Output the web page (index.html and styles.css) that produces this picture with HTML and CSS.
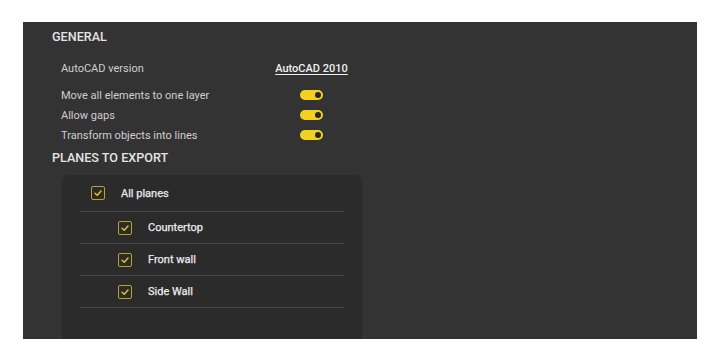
FILE: index.html
```html
<!DOCTYPE html>
<html>
<head>
<meta charset="utf-8">
<link rel="stylesheet" href="styles.css">
</head>
<body>
<div class="panel">
  <div class="heading">GENERAL</div>
  <div class="settings">
    <div class="row row-version">
      <span class="label">AutoCAD version</span>
      <span class="value"><span class="link">AutoCAD 2010</span></span>
    </div>
    <div class="toggles">
      <div class="row">
        <span class="label">Move all elements to one layer</span>
        <span class="value"><span class="toggle"><span class="knob"></span></span></span>
      </div>
      <div class="row">
        <span class="label">Allow gaps</span>
        <span class="value"><span class="toggle"><span class="knob"></span></span></span>
      </div>
      <div class="row">
        <span class="label">Transform objects into lines</span>
        <span class="value"><span class="toggle"><span class="knob"></span></span></span>
      </div>
    </div>
  </div>
  <div class="heading heading-planes">PLANES TO EXPORT</div>
  <div class="card">
    <div class="item item-all">
      <span class="check"><svg viewBox="0 0 10 10" width="10" height="10"><path d="M2 5.2 L4.2 7.2 L8 3" fill="none" stroke="#e8c61f" stroke-width="1.4" stroke-linecap="round" stroke-linejoin="round"/></svg></span>
      <span class="item-text">All planes</span>
    </div>
    <div class="item item-child">
      <span class="check"><svg viewBox="0 0 10 10" width="10" height="10"><path d="M2 5.2 L4.2 7.2 L8 3" fill="none" stroke="#e8c61f" stroke-width="1.4" stroke-linecap="round" stroke-linejoin="round"/></svg></span>
      <span class="item-text">Countertop</span>
    </div>
    <div class="item item-child">
      <span class="check"><svg viewBox="0 0 10 10" width="10" height="10"><path d="M2 5.2 L4.2 7.2 L8 3" fill="none" stroke="#e8c61f" stroke-width="1.4" stroke-linecap="round" stroke-linejoin="round"/></svg></span>
      <span class="item-text">Front wall</span>
    </div>
    <div class="item item-child">
      <span class="check"><svg viewBox="0 0 10 10" width="10" height="10"><path d="M2 5.2 L4.2 7.2 L8 3" fill="none" stroke="#e8c61f" stroke-width="1.4" stroke-linecap="round" stroke-linejoin="round"/></svg></span>
      <span class="item-text">Side Wall</span>
    </div>
  </div>
</div>
</body>
</html>
```
FILE: styles.css
```css
html, body {
  margin: 0;
  padding: 0;
  background: #ffffff;
}
body {
  padding: 22px 23px 0 23px;
  font-family: Roboto, "Liberation Sans", sans-serif;
}
.panel {
  background: #333333;
  height: 317px;
  overflow: hidden;
  padding: 7px 0 0 29px;
  box-sizing: border-box;
}
.heading {
  font-size: 12.6px;
  line-height: 16px;
  font-weight: 500;
  color: #e4e4e4;
}
.settings {
  padding-left: 9px;
  margin-top: 13px;
}
.row {
  display: flex;
  align-items: center;
  height: 20px;
}
.label {
  width: 200px;
  font-size: 11px;
  color: #cfcfcf;
}
.value {
  width: 101px;
  display: flex;
  justify-content: center;
}
.link {
  font-size: 11px;
  font-weight: 500;
  color: #f0f0f0;
  text-decoration: underline;
  text-underline-offset: 2px;
}
.toggles {
  margin-top: 7px;
}
.toggle {
  width: 23px;
  height: 10px;
  border-radius: 5px;
  background: #f2d21f;
  display: flex;
  align-items: center;
  justify-content: flex-end;
  padding-right: 2px;
  box-sizing: border-box;
}
.knob {
  width: 6px;
  height: 6px;
  border-radius: 50%;
  background: #262626;
}
.heading-planes {
  margin-top: 5px;
}
.card {
  margin: 9px 0 0 10px;
  width: 300px;
  height: 200px;
  background: #2b2b2b;
  border-radius: 8px;
  padding: 0 18px;
  box-sizing: border-box;
}
.item {
  display: flex;
  align-items: center;
  height: 31px;
  border-bottom: 1px solid #474747;
}
.item-all {
  height: 36px;
  padding-left: 11px;
}
.item-child {
  padding-left: 38px;
}
.check {
  width: 14px;
  height: 14px;
  box-sizing: border-box;
  border: 1.5px solid #bfa124;
  border-radius: 2px;
  display: flex;
  align-items: center;
  justify-content: center;
  margin-right: 16px;
}
.item-text {
  font-size: 11px;
  font-weight: 400;
  color: #ececec;
  -webkit-text-stroke: 0.25px #ececec;
}
```
